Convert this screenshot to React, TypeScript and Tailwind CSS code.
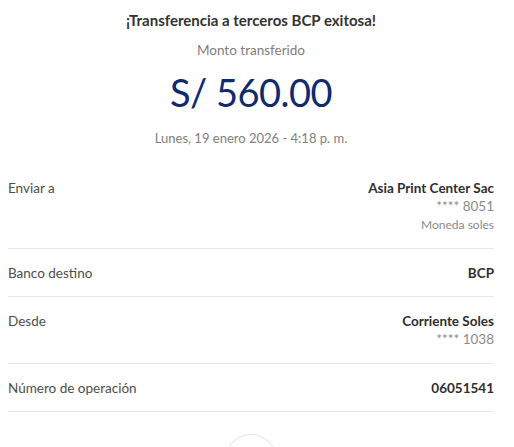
import React from "react";

const font = { fontFamily: 'Lato, "Noto Sans", sans-serif' };

function Row({ label, values }: { label: string; values: { text: string; kind: "main" | "sub" | "small" }[] }) {
  return (
    <div className="flex justify-between border-b border-[#e6e6e6] pt-[15px] pb-[14px]">
      <div className="text-[13.5px] leading-[18px] text-[#4d4d4d]">{label}</div>
      <div className="flex flex-col items-end">
        {values.map((v, i) => (
          <div
            key={i}
            className={
              v.kind === "main"
                ? "text-[13.5px] leading-[18px] font-bold text-[#2e2e2e]"
                : v.kind === "sub"
                ? "text-[13.5px] leading-[19px] text-[#8a8a8a]"
                : "text-[12px] leading-[18px] text-[#8a8a8a]"
            }
          >
            {v.text}
          </div>
        ))}
      </div>
    </div>
  );
}

export default function App() {
  return (
    <div className="w-[514px] h-[447px] bg-white overflow-hidden" style={font}>
      <div className="flex flex-col items-center pt-[10px] pl-[8px] pr-[20px]">
        <div className="text-[15px] leading-[20px] font-bold text-[#333333]">¡Transferencia a terceros BCP exitosa!</div>
        <div className="mt-[10px] text-[13.5px] leading-[20px] text-[#808080]">Monto transferido</div>
        <div className="mt-[8px] text-[38px] leading-[48px] font-normal tracking-[-0.5px] text-[#102a6e]">S/ 560.00</div>
        <div className="mt-[13px] text-[13px] leading-[18px] text-[#808080]">Lunes, 19 enero 2026 - 4:18 p. m.</div>
      </div>
      <div className="mt-[17px] pl-[8px] pr-[20px]">
        <Row
          label="Enviar a"
          values={[
            { text: "Asia Print Center Sac", kind: "main" },
            { text: "**** 8051", kind: "sub" },
            { text: "Moneda soles", kind: "small" },
          ]}
        />
        <Row label="Banco destino" values={[{ text: "BCP", kind: "main" }]} />
        <Row
          label="Desde"
          values={[
            { text: "Corriente Soles", kind: "main" },
            { text: "**** 1038", kind: "sub" },
          ]}
        />
        <Row label="Número de operación" values={[{ text: "06051541", kind: "main" }]} />
      </div>
      <div className="flex justify-center mt-[22px] pr-[12px]">
        <div className="w-[52px] h-[52px] rounded-full border border-[#e3e3e3]" />
      </div>
    </div>
  );
}
